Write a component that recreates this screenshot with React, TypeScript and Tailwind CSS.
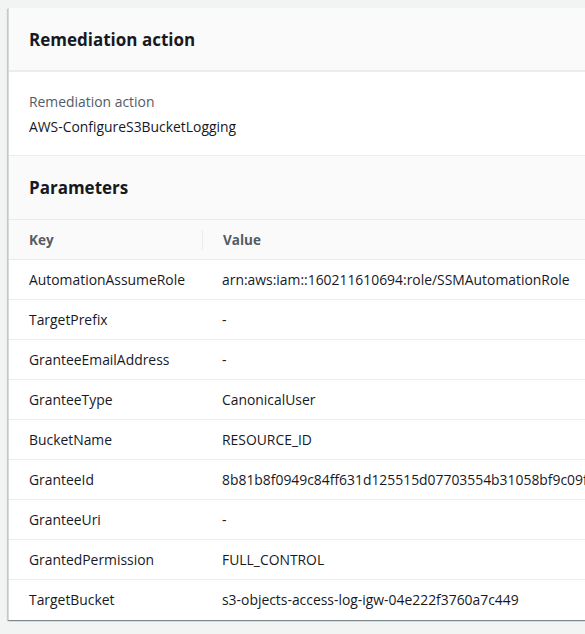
import React from "react";

const rows: [string, string][] = [
  ["AutomationAssumeRole", "arn:aws:iam::160211610694:role/SSMAutomationRole"],
  ["TargetPrefix", "-"],
  ["GranteeEmailAddress", "-"],
  ["GranteeType", "CanonicalUser"],
  ["BucketName", "RESOURCE_ID"],
  ["GranteeId", "8b81b8f0949c84ff631d125515d07703554b31058bf9c09f1e1cf5e9b5b5d2f3"],
  ["GranteeUri", "-"],
  ["GrantedPermission", "FULL_CONTROL"],
  ["TargetBucket", "s3-objects-access-log-igw-04e222f3760a7c449"],
];

export default function App() {
  return (
    <div
      className="w-[585px] h-[634px] overflow-hidden bg-[#f2f3f3] pt-2 pl-2"
      style={{ fontFamily: '"Open Sans", "Noto Sans", sans-serif' }}
    >
      <div className="w-[700px] bg-white border-l border-[#d5dbdb] shadow-[0_1px_1px_0_rgba(0,28,36,0.3),1px_1px_1px_0_rgba(0,28,36,0.15),-1px_1px_1px_0_rgba(0,28,36,0.15)]">
        <div className="h-[64px] bg-[#fafafa] border-b-2 border-[#eaeded] flex items-center px-5">
          <h2 className="text-[17px] font-bold text-[#16191f] leading-none">Remediation action</h2>
        </div>
        <div className="h-[84px] border-b border-[#eaeded] px-5 pt-[20px]">
          <div className="text-[13.9px] text-[#545b64] leading-[20px]">Remediation action</div>
          <div className="text-[13.9px] text-[#16191f] leading-[20px] mt-[5px]">AWS-ConfigureS3BucketLogging</div>
        </div>
        <div className="h-[64px] bg-[#fafafa] border-b border-[#eaeded] flex items-center px-5">
          <h2 className="text-[17px] font-bold text-[#16191f] leading-none">Parameters</h2>
        </div>
        <div className="h-[40px] bg-[#fafafa] border-b border-[#eaeded] flex items-center pt-px">
          <div className="w-[193px] pl-5 text-[13.5px] font-bold text-[#545b64]">Key</div>
          <div className="w-px h-[20px] bg-[#eaeded]" />
          <div className="pl-5 text-[13.5px] font-bold text-[#545b64]">Value</div>
        </div>
        {rows.map(([k, v], i) => (
          <div
            key={k}
            className={`h-[40px] flex items-center pt-px text-[13.9px] text-[#16191f] whitespace-nowrap ${i < rows.length - 1 ? "border-b border-[#eaeded]" : ""}`}
          >
            <div className="w-[193px] pl-5 shrink-0">{k}</div>
            <div className="pl-[20px]">{v}</div>
          </div>
        ))}
      </div>
    </div>
  );
}
